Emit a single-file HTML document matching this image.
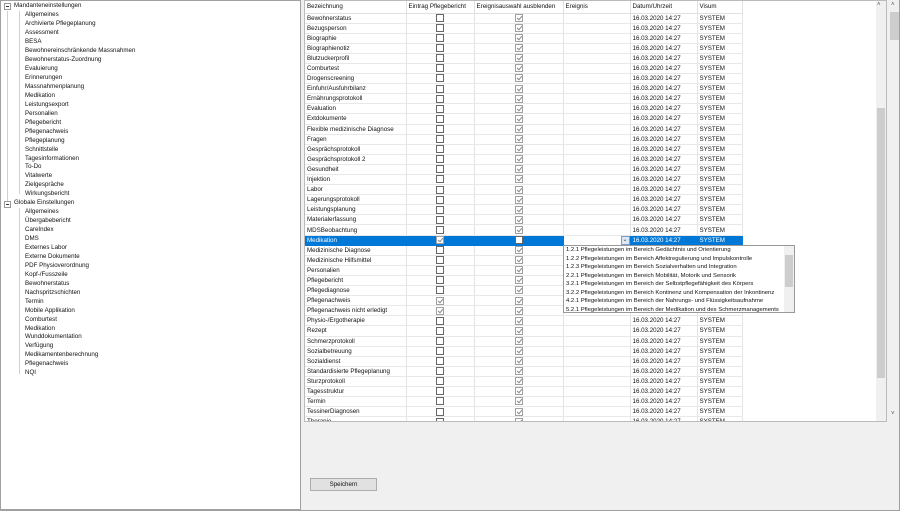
<!DOCTYPE html>
<html><head><meta charset="utf-8"><style>
*{margin:0;padding:0;box-sizing:border-box}
body{width:900px;height:511px;background:#f0f0f0;font-family:"Liberation Sans",sans-serif;font-size:6.2px;color:#111;position:relative;overflow:hidden}
#left{position:absolute;left:0;top:0;width:301px;height:510px;background:#fff;border:1px solid #a0a0a0}
.t{position:absolute;white-space:nowrap;line-height:8px}
.vl{position:absolute;border-left:1px solid #d0d0d0;width:0}
.exp{position:absolute;width:7px;height:7px;border:1px solid #999;background:#fff;left:3px}
.exp:after{content:"";position:absolute;left:1px;top:2px;width:3px;border-top:1px solid #333}
#grid{position:absolute;left:304px;top:0;width:583px;height:422px;background:#fff;border:1px solid #bbb;overflow:hidden}
table{border-collapse:collapse;table-layout:fixed;position:absolute;left:0;top:0}
td,th{height:10.1px;border-right:1px solid #e4e4e4;border-bottom:1px solid #e8e8e8;white-space:nowrap;overflow:hidden;font-weight:normal;text-align:left;padding-left:2px;line-height:9px}
th{height:12px;background:#fff;border-right:1px solid #e0e0e0;border-bottom:1px solid #e0e0e0}
td.c{text-align:center;padding:0}
.cb{display:inline-block;width:8px;height:8px;border:1px solid #666;background:#fff;vertical-align:middle;position:relative}
.ck{border-color:#a0a0a0}
.ck:after{content:"";position:absolute;left:2px;top:0;width:2px;height:4px;border:solid #888;border-width:0 1px 1px 0;transform:rotate(40deg)}
tr.sel td{background:#0078d7;color:#fff;border-color:#0078d7}
#vs{position:absolute;left:876px;top:1px;width:10px;height:420px;background:#f0f0f0}
#os{position:absolute;left:890px;top:1px;width:10px;height:421px;background:#f0f0f0}
#pop{position:absolute;left:563px;top:245px;width:232px;height:68px;background:#fff;border:1px solid #999;font-size:5.9px}
#pop div.i{position:absolute;left:2px;white-space:nowrap;line-height:8px}
#btn{position:absolute;left:310px;top:478px;width:67px;height:13px;background:#e1e1e1;border:1px solid #adadad;text-align:center;line-height:11px}
</style></head><body>
<div id="left">
<div class="exp" style="top:2px"></div>
<div class="t" style="left:13px;top:1px">Mandanteneinstellungen</div>
<div class="vl" style="left:6px;top:10px;height:190px"></div>
<div class="vl" style="left:18px;top:10px;height:183px"></div>
<div class="t" style="left:24px;top:10px">Allgemeines</div>
<div class="t" style="left:24px;top:19px">Archivierte Pflegeplanung</div>
<div class="t" style="left:24px;top:28px">Assessment</div>
<div class="t" style="left:24px;top:37px">BESA</div>
<div class="t" style="left:24px;top:46px">Bewohnereinschränkende Massnahmen</div>
<div class="t" style="left:24px;top:55px">Bewohnerstatus-Zuordnung</div>
<div class="t" style="left:24px;top:64px">Evaluierung</div>
<div class="t" style="left:24px;top:73px">Erinnerungen</div>
<div class="t" style="left:24px;top:82px">Massnahmenplanung</div>
<div class="t" style="left:24px;top:91px">Medikation</div>
<div class="t" style="left:24px;top:99.5px">Leistungsexport</div>
<div class="t" style="left:24px;top:108.5px">Personalien</div>
<div class="t" style="left:24px;top:117.5px">Pflegebericht</div>
<div class="t" style="left:24px;top:126.5px">Pflegenachweis</div>
<div class="t" style="left:24px;top:135.5px">Pflegeplanung</div>
<div class="t" style="left:24px;top:144.5px">Schnittstelle</div>
<div class="t" style="left:24px;top:153.5px">Tagesinformationen</div>
<div class="t" style="left:24px;top:162px">To-Do</div>
<div class="t" style="left:24px;top:171px">Vitalwerte</div>
<div class="t" style="left:24px;top:180px">Zielgespräche</div>
<div class="t" style="left:24px;top:189px">Wirkungsbericht</div>
<div class="exp" style="top:200px"></div>
<div class="t" style="left:13px;top:198px">Globale Einstellungen</div>
<div class="vl" style="left:18px;top:207px;height:166px"></div>
<div class="t" style="left:24px;top:207px">Allgemeines</div>
<div class="t" style="left:24px;top:216px">Übergabebericht</div>
<div class="t" style="left:24px;top:225px">CareIndex</div>
<div class="t" style="left:24px;top:234px">DMS</div>
<div class="t" style="left:24px;top:243px">Externes Labor</div>
<div class="t" style="left:24px;top:252px">Externe Dokumente</div>
<div class="t" style="left:24px;top:261px">PDF Physioverordnung</div>
<div class="t" style="left:24px;top:270px">Kopf-/Fusszeile</div>
<div class="t" style="left:24px;top:279px">Bewohnerstatus</div>
<div class="t" style="left:24px;top:288px">Nachspritzschichten</div>
<div class="t" style="left:24px;top:297px">Termin</div>
<div class="t" style="left:24px;top:306px">Mobile Applikation</div>
<div class="t" style="left:24px;top:315px">Comburtest</div>
<div class="t" style="left:24px;top:324px">Medikation</div>
<div class="t" style="left:24px;top:332px">Wunddokumentation</div>
<div class="t" style="left:24px;top:341px">Verfügung</div>
<div class="t" style="left:24px;top:350px">Medikamentenberechnung</div>
<div class="t" style="left:24px;top:359px">Pflegenachweis</div>
<div class="t" style="left:24px;top:368px">NQI</div>
</div>

<div id="grid">
<table>
<colgroup><col style="width:101px"><col style="width:68px"><col style="width:89px"><col style="width:67px"><col style="width:67px"><col style="width:45px"></colgroup>
<tr><th>Bezeichnung</th><th>Eintrag Pflegebericht</th><th>Ereignisauswahl ausblenden</th><th>Ereignis</th><th>Datum/Uhrzeit</th><th>Visum</th></tr>
<tr><td>Bewohnerstatus</td><td class="c"><i class="cb"></i></td><td class="c"><i class="cb ck"></i></td><td></td><td>16.03.2020 14:27</td><td>SYSTEM</td></tr>
<tr><td>Bezugsperson</td><td class="c"><i class="cb"></i></td><td class="c"><i class="cb ck"></i></td><td></td><td>16.03.2020 14:27</td><td>SYSTEM</td></tr>
<tr><td>Biographie</td><td class="c"><i class="cb"></i></td><td class="c"><i class="cb ck"></i></td><td></td><td>16.03.2020 14:27</td><td>SYSTEM</td></tr>
<tr><td>Biographienotiz</td><td class="c"><i class="cb"></i></td><td class="c"><i class="cb ck"></i></td><td></td><td>16.03.2020 14:27</td><td>SYSTEM</td></tr>
<tr><td>Blutzuckerprofil</td><td class="c"><i class="cb"></i></td><td class="c"><i class="cb ck"></i></td><td></td><td>16.03.2020 14:27</td><td>SYSTEM</td></tr>
<tr><td>Comburtest</td><td class="c"><i class="cb"></i></td><td class="c"><i class="cb ck"></i></td><td></td><td>16.03.2020 14:27</td><td>SYSTEM</td></tr>
<tr><td>Drogenscreening</td><td class="c"><i class="cb"></i></td><td class="c"><i class="cb ck"></i></td><td></td><td>16.03.2020 14:27</td><td>SYSTEM</td></tr>
<tr><td>Einfuhr/Ausfuhrbilanz</td><td class="c"><i class="cb"></i></td><td class="c"><i class="cb ck"></i></td><td></td><td>16.03.2020 14:27</td><td>SYSTEM</td></tr>
<tr><td>Ernährungsprotokoll</td><td class="c"><i class="cb"></i></td><td class="c"><i class="cb ck"></i></td><td></td><td>16.03.2020 14:27</td><td>SYSTEM</td></tr>
<tr><td>Evaluation</td><td class="c"><i class="cb"></i></td><td class="c"><i class="cb ck"></i></td><td></td><td>16.03.2020 14:27</td><td>SYSTEM</td></tr>
<tr><td>Extdokumente</td><td class="c"><i class="cb"></i></td><td class="c"><i class="cb ck"></i></td><td></td><td>16.03.2020 14:27</td><td>SYSTEM</td></tr>
<tr><td>Flexible medizinische Diagnose</td><td class="c"><i class="cb"></i></td><td class="c"><i class="cb ck"></i></td><td></td><td>16.03.2020 14:27</td><td>SYSTEM</td></tr>
<tr><td>Fragen</td><td class="c"><i class="cb"></i></td><td class="c"><i class="cb ck"></i></td><td></td><td>16.03.2020 14:27</td><td>SYSTEM</td></tr>
<tr><td>Gesprächsprotokoll</td><td class="c"><i class="cb"></i></td><td class="c"><i class="cb ck"></i></td><td></td><td>16.03.2020 14:27</td><td>SYSTEM</td></tr>
<tr><td>Gesprächsprotokoll 2</td><td class="c"><i class="cb"></i></td><td class="c"><i class="cb ck"></i></td><td></td><td>16.03.2020 14:27</td><td>SYSTEM</td></tr>
<tr><td>Gesundheit</td><td class="c"><i class="cb"></i></td><td class="c"><i class="cb ck"></i></td><td></td><td>16.03.2020 14:27</td><td>SYSTEM</td></tr>
<tr><td>Injektion</td><td class="c"><i class="cb"></i></td><td class="c"><i class="cb ck"></i></td><td></td><td>16.03.2020 14:27</td><td>SYSTEM</td></tr>
<tr><td>Labor</td><td class="c"><i class="cb"></i></td><td class="c"><i class="cb ck"></i></td><td></td><td>16.03.2020 14:27</td><td>SYSTEM</td></tr>
<tr><td>Lagerungsprotokoll</td><td class="c"><i class="cb"></i></td><td class="c"><i class="cb ck"></i></td><td></td><td>16.03.2020 14:27</td><td>SYSTEM</td></tr>
<tr><td>Leistungsplanung</td><td class="c"><i class="cb"></i></td><td class="c"><i class="cb ck"></i></td><td></td><td>16.03.2020 14:27</td><td>SYSTEM</td></tr>
<tr><td>Materialerfassung</td><td class="c"><i class="cb"></i></td><td class="c"><i class="cb ck"></i></td><td></td><td>16.03.2020 14:27</td><td>SYSTEM</td></tr>
<tr><td>MDSBeobachtung</td><td class="c"><i class="cb"></i></td><td class="c"><i class="cb ck"></i></td><td></td><td>16.03.2020 14:27</td><td>SYSTEM</td></tr>
<tr class="sel"><td>Medikation</td><td class="c"><i class="cb ck"></i></td><td class="c"><i class="cb"></i></td><td style="background:#fff;position:relative"><span style="position:absolute;right:0;top:0;width:9px;height:9px;border:1px solid #7a9cc6;background:#dce8f5;color:#444;font-size:6px;line-height:7px;text-align:center">⌄</span></td><td>16.03.2020 14:27</td><td>SYSTEM</td></tr>
<tr><td>Medizinische Diagnose</td><td class="c"><i class="cb"></i></td><td class="c"><i class="cb ck"></i></td><td></td><td>16.03.2020 14:27</td><td>SYSTEM</td></tr>
<tr><td>Medizinische Hilfsmittel</td><td class="c"><i class="cb"></i></td><td class="c"><i class="cb ck"></i></td><td></td><td>16.03.2020 14:27</td><td>SYSTEM</td></tr>
<tr><td>Personalien</td><td class="c"><i class="cb"></i></td><td class="c"><i class="cb ck"></i></td><td></td><td>16.03.2020 14:27</td><td>SYSTEM</td></tr>
<tr><td>Pflegebericht</td><td class="c"><i class="cb"></i></td><td class="c"><i class="cb ck"></i></td><td></td><td>16.03.2020 14:27</td><td>SYSTEM</td></tr>
<tr><td>Pflegediagnose</td><td class="c"><i class="cb"></i></td><td class="c"><i class="cb ck"></i></td><td></td><td>16.03.2020 14:27</td><td>SYSTEM</td></tr>
<tr><td>Pflegenachweis</td><td class="c"><i class="cb ck"></i></td><td class="c"><i class="cb ck"></i></td><td></td><td>16.03.2020 14:27</td><td>SYSTEM</td></tr>
<tr><td>Pflegenachweis nicht erledigt</td><td class="c"><i class="cb ck"></i></td><td class="c"><i class="cb ck"></i></td><td></td><td>16.03.2020 14:27</td><td>SYSTEM</td></tr>
<tr><td>Physio-/Ergotherapie</td><td class="c"><i class="cb"></i></td><td class="c"><i class="cb ck"></i></td><td></td><td>16.03.2020 14:27</td><td>SYSTEM</td></tr>
<tr><td>Rezept</td><td class="c"><i class="cb"></i></td><td class="c"><i class="cb ck"></i></td><td></td><td>16.03.2020 14:27</td><td>SYSTEM</td></tr>
<tr><td>Schmerzprotokoll</td><td class="c"><i class="cb"></i></td><td class="c"><i class="cb ck"></i></td><td></td><td>16.03.2020 14:27</td><td>SYSTEM</td></tr>
<tr><td>Sozialbetreuung</td><td class="c"><i class="cb"></i></td><td class="c"><i class="cb ck"></i></td><td></td><td>16.03.2020 14:27</td><td>SYSTEM</td></tr>
<tr><td>Sozialdienst</td><td class="c"><i class="cb"></i></td><td class="c"><i class="cb ck"></i></td><td></td><td>16.03.2020 14:27</td><td>SYSTEM</td></tr>
<tr><td>Standardisierte Pflegeplanung</td><td class="c"><i class="cb"></i></td><td class="c"><i class="cb ck"></i></td><td></td><td>16.03.2020 14:27</td><td>SYSTEM</td></tr>
<tr><td>Sturzprotokoll</td><td class="c"><i class="cb"></i></td><td class="c"><i class="cb ck"></i></td><td></td><td>16.03.2020 14:27</td><td>SYSTEM</td></tr>
<tr><td>Tagesstruktur</td><td class="c"><i class="cb"></i></td><td class="c"><i class="cb ck"></i></td><td></td><td>16.03.2020 14:27</td><td>SYSTEM</td></tr>
<tr><td>Termin</td><td class="c"><i class="cb"></i></td><td class="c"><i class="cb ck"></i></td><td></td><td>16.03.2020 14:27</td><td>SYSTEM</td></tr>
<tr><td>TessinerDiagnosen</td><td class="c"><i class="cb"></i></td><td class="c"><i class="cb ck"></i></td><td></td><td>16.03.2020 14:27</td><td>SYSTEM</td></tr>
<tr><td>Therapie</td><td class="c"><i class="cb"></i></td><td class="c"><i class="cb ck"></i></td><td></td><td>16.03.2020 14:27</td><td>SYSTEM</td></tr>
</table>
</div>
<div id="vs"><div style="position:absolute;left:1px;top:1px;font-size:6px;color:#555">˄</div><div style="position:absolute;left:1px;top:107px;width:8px;height:270px;background:#cdcdcd"></div></div>
<div id="os"><div style="position:absolute;left:1px;top:1px;font-size:6px;color:#555">˄</div><div style="position:absolute;left:0;top:11px;width:9px;height:28px;background:#cdcdcd"></div><div style="position:absolute;left:1px;top:410px;font-size:6px;color:#555">˅</div></div>
<div id="pop">
<div class="i" style="top:0">1.2.1 Pflegeleistungen im Bereich Gedächtnis und Orientierung</div>
<div class="i" style="top:8.5px">1.2.2 Pflegeleistungen im Bereich Affektregulierung und Impulskontrolle</div>
<div class="i" style="top:17px">1.2.3 Pflegeleistungen im Bereich Sozialverhalten und Integration</div>
<div class="i" style="top:25.5px">2.2.1 Pflegeleistungen im Bereich Mobilität, Motorik und Sensorik</div>
<div class="i" style="top:34px">3.2.1 Pflegeleistungen im Bereich der Selbstpflegefähigkeit des Körpers</div>
<div class="i" style="top:42.5px">3.2.2 Pflegeleistungen im Bereich Kontinenz und Kompensation der Inkontinenz</div>
<div class="i" style="top:51px">4.2.1 Pflegeleistungen im Bereich der Nahrungs- und Flüssigkeitsaufnahme</div>
<div class="i" style="top:59.5px">5.2.1 Pflegeleistungen im Bereich der Medikation und des Schmerzmanagements</div>
<div style="position:absolute;right:0;top:0;width:10px;height:66px;background:#f0f0f0"><div style="position:absolute;left:1px;top:9px;width:8px;height:32px;background:#cdcdcd"></div></div>
</div>
<div id="btn">Speichern</div>
<div style="position:absolute;left:0;top:510px;width:900px;height:1px;background:#a0a0a0"></div>
<div style="position:absolute;left:899px;top:0;width:1px;height:511px;background:#a0a0a0"></div>
</body></html>
